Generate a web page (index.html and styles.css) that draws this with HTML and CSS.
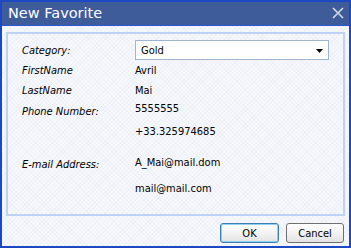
FILE: index.html
```html
<!DOCTYPE html>
<html>
<head>
<meta charset="utf-8">
<link rel="stylesheet" href="styles.css">
</head>
<body>
<div class="window">
  <div class="titlebar">
    <span class="title">New Favorite</span>
    <svg class="close" width="12" height="12" viewBox="0 0 12 12"><path d="M1 1 L11 11 M11 1 L1 11" stroke="#d3dae8" stroke-width="1.6" fill="none"/></svg>
  </div>
  <div class="content">
    <div class="group">
      <div class="form">
        <span class="lbl">Category:</span>
        <div class="select"><span>Gold</span><svg class="arrow" width="7" height="4" viewBox="0 0 7 4"><path d="M0 0 H7 L3.5 4 Z" fill="#000"/></svg></div>
        <span class="lbl">FirstName</span><span class="val">Avril</span>
        <span class="lbl">LastName</span><span class="val">Mai</span>
        <span class="lbl low">Phone Number:</span><span class="val">5555555</span>
        <span class="lbl"></span><span class="val">+33.325974685</span>
        <span class="lbl low">E-mail Address:</span><span class="val">A_Mai@mail.dom</span>
        <span class="lbl"></span><span class="val">mail@mail.com</span>
      </div>
    </div>
    <div class="buttons">
      <button class="btn ok">OK</button>
      <button class="btn cancel">Cancel</button>
    </div>
  </div>
</div>
</body>
</html>
```
FILE: styles.css
```css
html, body { margin: 0; padding: 0; }
body {
  width: 351px; height: 248px; overflow: hidden;
  font-family: "DejaVu Sans Condensed", "DejaVu Sans", sans-serif;
  font-stretch: condensed;
  font-size: 11px; color: #000;
}
.window {
  width: 351px; height: 248px; box-sizing: border-box;
  border: 2px solid #1d48c4;
  display: flex; flex-direction: column;
  background-color: #f6f8fc;
  background-image: repeating-linear-gradient(45deg, rgba(80,100,160,0.035) 0 1px, transparent 1px 3px),
                    repeating-linear-gradient(-45deg, rgba(80,100,160,0.035) 0 1px, transparent 1px 3px);
}
.titlebar {
  height: 23px; flex: none;
  border-bottom: 1px solid #2a58d4;
  background: #3e5b9a;
  display: flex; align-items: center; justify-content: space-between;
  padding: 0 5px 0 6px;
}
.title {
  font-family: "DejaVu Sans", sans-serif; font-stretch: normal;
  font-size: 14.5px; color: #fff; padding-bottom: 1px;
}
.close { display: block; margin-bottom: 1px; }
.content {
  flex: 1; display: flex; flex-direction: column;
  padding: 6px 5px 3px 4px;
}
.group {
  border: 2px solid #bdd2f4;
  padding: 6px 14px 18px 14px;
  margin-right: -1px;
}
.form {
  display: grid;
  grid-template-columns: 113px 1fr;
  grid-template-rows: 20px 21px 18px 19px 26px 36px 16px;
  align-items: center;
}
.lbl { font-style: italic; }
.lbl.low { padding-top: 5px; }
.select {
  height: 20px; box-sizing: border-box;
  border: 1px solid #9fb4cf; background: #fff;
  display: flex; align-items: center; justify-content: space-between;
  padding: 0 5px 0 5px;
}
.arrow { display: block; margin-top: 1px; }
.buttons {
  margin-top: 7px;
  display: flex; justify-content: flex-end; gap: 7px;
}
.btn {
  height: 20px; box-sizing: border-box; padding: 0;
  font-family: inherit; font-stretch: condensed; font-size: 11px; color: #000;
  border-radius: 3px;
  background: linear-gradient(#ffffff, #f0f0f0 60%, #e2e2e2);
  border: 1px solid #707070;
}
.ok { width: 59px; border-color: #3c7fb1; box-shadow: inset 0 0 0 1px #8fd0f2; }
.cancel { width: 58px; }
```
